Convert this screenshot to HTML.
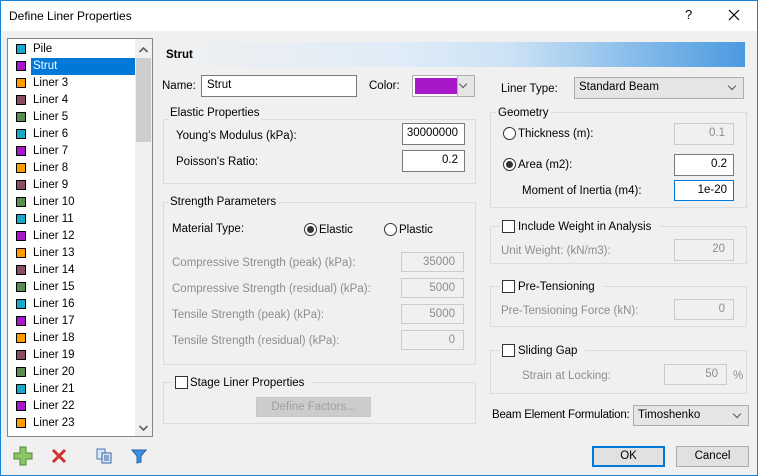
<!DOCTYPE html>
<html><head><style>
*{box-sizing:border-box;margin:0;padding:0}
body{width:758px;height:476px;overflow:hidden;font-family:"Liberation Sans",sans-serif;font-size:11.5px;color:#000;background:#f0f0f0;position:relative}
.a{position:absolute}
.frame{left:0;top:0;width:758px;height:476px;border:1px solid #1883d7}
.title{left:1px;top:1px;width:756px;height:30px;background:#fff}
.t{position:absolute;white-space:nowrap;line-height:14px}
.in{position:absolute;background:#fff;border:1px solid #7a7a7a;text-align:right;padding-right:6px;line-height:18px}
.dis{position:absolute;background:#f0f0f0;border:1px solid #ccc;color:#8d8d8d;text-align:right;padding-right:8px;line-height:18px}
.g{color:#8d8d8d}
.grp{position:absolute;border:1px solid #dcdcdc}
.lab{position:absolute;background:#f0f0f0;padding:0 2px;line-height:14px;white-space:nowrap}
.rad{position:absolute;width:13px;height:13px;border:1px solid #333;border-radius:50%;background:#fff}
.rad.on::after{content:"";position:absolute;left:2px;top:2px;width:7px;height:7px;border-radius:50%;background:#333}
.chk{position:absolute;width:13px;height:13px;border:1px solid #333;background:#fff}
.combo{position:absolute;background:#e5e5e5;border:1px solid #adadad;padding-left:4px;line-height:19px}
.combo::after{content:"";position:absolute;right:8px;top:5px;width:5px;height:5px;border-right:1px solid #555;border-bottom:1px solid #555;transform:rotate(45deg)}
.btn{position:absolute;background:#e1e1e1;border:1px solid #adadad;text-align:center;line-height:18px}
.item{position:absolute;left:9px;height:17px;width:124px;line-height:17px}
.item i{position:absolute;left:7px;top:3px;width:10px;height:10px;border:1px solid #000}
.item span{position:absolute;left:22px;padding:0 2px}
</style></head><body>
<div class="a title"></div>
<div class="t" style="left:9px;top:9px;font-size:12px">Define Liner Properties</div>
<div class="t" style="left:685px;top:8px;font-size:13px">?</div>
<svg class="a" style="left:728px;top:9px" width="12" height="12"><path d="M1 1L11 11M11 1L1 11" stroke="#000" stroke-width="1.2"/></svg>
<div class="a frame"></div>

<!-- list -->
<div class="a" style="left:7px;top:38px;width:146px;height:399px;background:#fff;border:1px solid #828790"></div>
<div class="a" style="left:135px;top:39px;width:17px;height:397px;background:#f0f0f0"></div>
<div class="a" style="left:136px;top:58px;width:15px;height:84px;background:#cdcdcd"></div>
<svg class="a" style="left:138px;top:46px" width="11" height="8"><path d="M1.5 6L5.5 2L9.5 6" stroke="#606060" stroke-width="1.6" fill="none"/></svg>
<svg class="a" style="left:138px;top:424px" width="11" height="8"><path d="M1.5 2L5.5 6L9.5 2" stroke="#606060" stroke-width="1.6" fill="none"/></svg>
<div id="list"></div>
<script>
var c=['#17a9c9','#a918c8','#ff9c00','#8b4c5f','#5b8a52'];var n=['Pile','Strut'];for(var i=3;i<=23;i++)n.push('Liner '+i);
var h='';n.forEach(function(s,k){var y=41+k*17;var sel=k==1;h+='<div class="item" style="top:'+y+'px"><i style="background:'+c[k%5]+'"></i><span style="'+(sel?'background:#0078d7;color:#fff;width:104px':'')+'">'+s+'</span></div>';});
document.getElementById('list').innerHTML=h;
</script>
<!-- bottom icons -->
<svg class="a" style="left:13px;top:446px" width="20" height="20"><path d="M7 1h6v6h6v6h-6v6H7v-6H1V7h6z" fill="#8cc466" stroke="#4e8a35"/></svg>
<svg class="a" style="left:50px;top:447px" width="18" height="18"><path d="M3 3L15 15M15 3L3 15" stroke="#d03030" stroke-width="3"/></svg>
<svg class="a" style="left:96px;top:448px" width="16" height="16"><rect x="1" y="1" width="8" height="10" fill="#dbe8f7" stroke="#4a78b0"/><rect x="6" y="5" width="9" height="10" fill="#dbe8f7" stroke="#3a60a0"/><path d="M8 8h5M8 10h5M8 12h5" stroke="#3a60a0"/></svg>
<svg class="a" style="left:131px;top:448px" width="16" height="16"><path d="M1 2h14l-5 6v6l-4 1V8z" fill="#3d8fe0" stroke="#2060b0"/></svg>

<!-- header -->
<div class="a" style="left:162px;top:42px;width:583px;height:25px;background:linear-gradient(90deg,#f0f0f0 0%,#e0ecf8 40%,#cce2f5 60%,#4a9ae0 100%)"></div>
<div class="t" style="left:166px;top:48px;font-weight:bold">Strut</div>

<div class="t" style="left:162px;top:79px">Name:</div>
<div class="in" style="left:201px;top:75px;width:156px;height:22px;text-align:left;padding-left:5px">Strut</div>
<div class="t" style="left:369px;top:79px">Color:</div>
<div class="a" style="left:412px;top:75px;width:63px;height:22px;background:#fff;border:1px solid #adadad"></div>
<div class="a" style="left:415px;top:78px;width:42px;height:16px;background:#a918c8"></div>
<div class="combo" style="left:457px;top:76px;width:17px;height:20px;border:none;border-left:1px solid #adadad"></div>

<div class="grp" style="left:163px;top:119px;width:313px;height:65px"></div>
<div class="lab" style="left:168px;top:106px">Elastic Properties</div>
<div class="t" style="left:176px;top:129px">Young's Modulus (kPa):</div>
<div class="in" style="left:402px;top:123px;width:63px;height:22px">30000000</div>
<div class="t" style="left:176px;top:155px">Poisson's Ratio:</div>
<div class="in" style="left:402px;top:150px;width:63px;height:22px">0.2</div>

<div class="grp" style="left:163px;top:202px;width:313px;height:163px"></div>
<div class="lab" style="left:168px;top:195px">Strength Parameters</div>
<div class="t" style="left:172px;top:222px">Material Type:</div>
<div class="rad on" style="left:304px;top:223px"></div><div class="t" style="left:319px;top:223px">Elastic</div>
<div class="rad" style="left:384px;top:223px"></div><div class="t" style="left:399px;top:223px">Plastic</div>
<div class="t g" style="left:172px;top:256px">Compressive Strength (peak) (kPa):</div>
<div class="dis" style="left:401px;top:252px;width:63px;height:20px">35000</div>
<div class="t g" style="left:172px;top:282px">Compressive Strength (residual) (kPa):</div>
<div class="dis" style="left:401px;top:278px;width:63px;height:20px">5000</div>
<div class="t g" style="left:172px;top:308px">Tensile Strength (peak) (kPa):</div>
<div class="dis" style="left:401px;top:304px;width:63px;height:20px">5000</div>
<div class="t g" style="left:172px;top:334px">Tensile Strength (residual) (kPa):</div>
<div class="dis" style="left:401px;top:330px;width:63px;height:20px">0</div>

<div class="grp" style="left:163px;top:382px;width:313px;height:42px"></div>
<div class="lab" style="left:172px;top:376px;padding-right:8px">&nbsp;&nbsp;&nbsp;&nbsp;&nbsp;Stage Liner Properties</div>
<div class="chk" style="left:175px;top:376px"></div>
<div class="btn" style="left:256px;top:397px;width:115px;height:20px;border-color:#c8c8c8;color:#a0a0a0;background:#ccc">Define Factors...</div>

<!-- right -->
<div class="t" style="left:501px;top:82px">Liner Type:</div>
<div class="combo" style="left:574px;top:77px;width:170px;height:22px">Standard Beam</div>

<div class="grp" style="left:490px;top:112px;width:257px;height:96px"></div>
<div class="lab" style="left:496px;top:106px">Geometry</div>
<div class="rad" style="left:503px;top:127px"></div><div class="t" style="left:518px;top:127px">Thickness (m):</div>
<div class="dis" style="left:674px;top:123px;width:60px;height:22px">0.1</div>
<div class="rad on" style="left:503px;top:158px"></div><div class="t" style="left:518px;top:158px">Area (m2):</div>
<div class="in" style="left:674px;top:154px;width:60px;height:22px">0.2</div>
<div class="t" style="left:522px;top:184px">Moment of Inertia (m4):</div>
<div class="in" style="left:674px;top:180px;width:60px;height:21px;border-color:#0078d7">1e-20</div>

<div class="grp" style="left:490px;top:226px;width:257px;height:38px"></div>
<div class="lab" style="left:500px;top:220px;padding-right:8px">&nbsp;&nbsp;&nbsp;&nbsp;&nbsp;Include Weight in Analysis</div>
<div class="chk" style="left:502px;top:220px"></div>
<div class="t g" style="left:501px;top:244px">Unit Weight: (kN/m3):</div>
<div class="dis" style="left:674px;top:239px;width:60px;height:22px">20</div>

<div class="grp" style="left:490px;top:286px;width:257px;height:41px"></div>
<div class="lab" style="left:500px;top:280px;padding-right:8px">&nbsp;&nbsp;&nbsp;&nbsp;&nbsp;Pre-Tensioning</div>
<div class="chk" style="left:502px;top:280px"></div>
<div class="t g" style="left:501px;top:304px">Pre-Tensioning Force (kN):</div>
<div class="dis" style="left:674px;top:299px;width:60px;height:21px">0</div>

<div class="grp" style="left:490px;top:350px;width:257px;height:44px"></div>
<div class="lab" style="left:500px;top:344px;padding-right:8px">&nbsp;&nbsp;&nbsp;&nbsp;&nbsp;Sliding Gap</div>
<div class="chk" style="left:502px;top:344px"></div>
<div class="t g" style="left:522px;top:369px">Strain at Locking:</div>
<div class="dis" style="left:664px;top:364px;width:63px;height:21px">50</div>
<div class="t g" style="left:733px;top:369px">%</div>

<div class="t" style="left:492px;top:408px;letter-spacing:-0.2px">Beam Element Formulation:</div>
<div class="combo" style="left:633px;top:405px;width:116px;height:21px">Timoshenko</div>

<div class="btn" style="left:592px;top:446px;width:73px;height:21px;border:2px solid #0078d7;line-height:17px">OK</div>
<div class="btn" style="left:676px;top:446px;width:73px;height:21px">Cancel</div>
</body></html>
